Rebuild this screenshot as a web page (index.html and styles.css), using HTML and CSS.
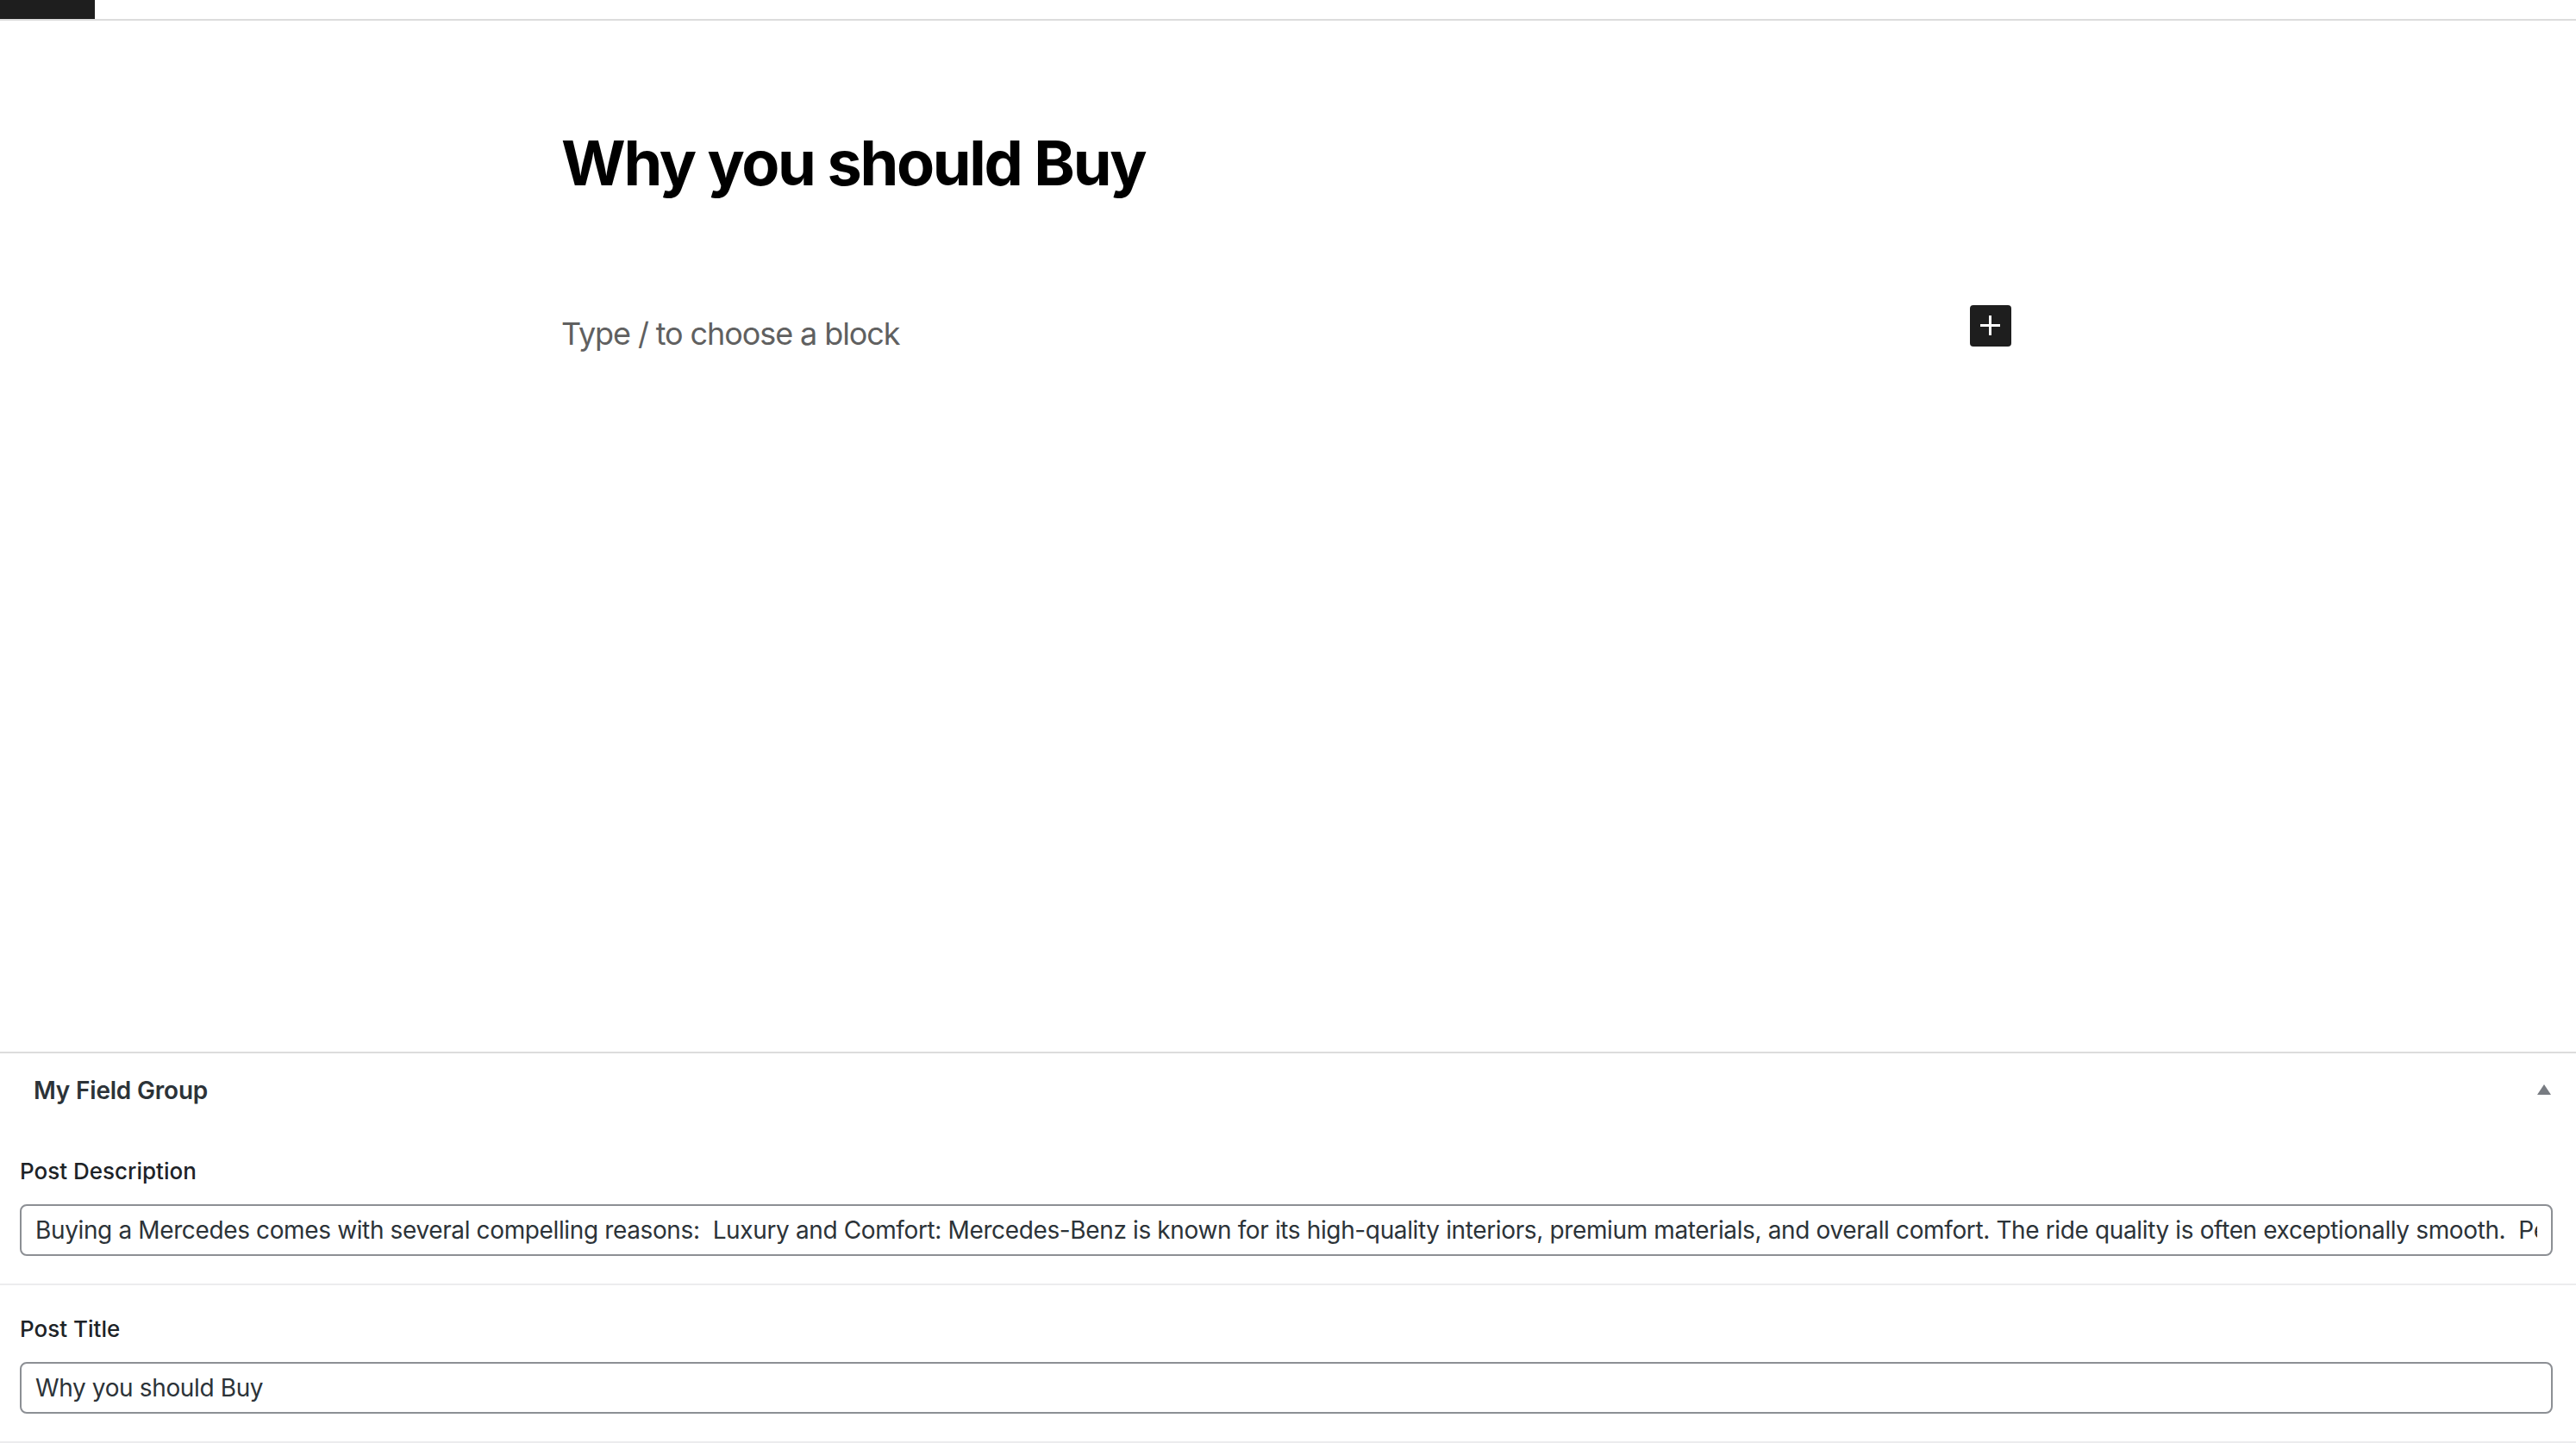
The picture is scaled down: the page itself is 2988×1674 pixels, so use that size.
FILE: index.html
```html
<!DOCTYPE html>
<html lang="en">
<head>
<meta charset="utf-8">
<title>Why you should Buy</title>
<link rel="stylesheet" href="styles.css">
</head>
<body>
<div class="topbar"><div class="logo-btn"></div></div>
<main class="editor">
  <div class="column">
    <h1 class="post-title">Why you should Buy</h1>
    <div class="block-row">
      <p class="placeholder">Type / to choose a block</p>
      <button class="inserter" aria-label="Add block">
        <svg viewBox="0 0 24 24" width="48" height="48"><path d="M11 12.5V17.5H12.5V12.5H17.5V11H12.5V6H11V11H6V12.5H11Z" fill="#fff"/></svg>
      </button>
    </div>
  </div>
</main>
<section class="postbox">
  <div class="postbox-header">
    <h2 class="hndle">My Field Group</h2>
    <span class="toggle"></span>
  </div>
  <div class="field">
    <label class="field-label">Post Description</label>
    <input class="field-input" type="text" value="Buying a Mercedes comes with several compelling reasons:  Luxury and Comfort: Mercedes-Benz is known for its high-quality interiors, premium materials, and overall comfort. The ride quality is often exceptionally smooth.  Performance and Engineering: Mercedes vehicles are engineered for precision.">
  </div>
  <div class="field">
    <label class="field-label">Post Title</label>
    <input class="field-input" type="text" value="Why you should Buy">
  </div>
</section>
</body>
</html>
```

FILE: styles.css
```css
* { box-sizing: border-box; }
html, body { margin: 0; padding: 0; background: #fff; }
body {
  font-family: Inter, "Noto Sans", "Liberation Sans", sans-serif;
  color: #1e1e1e;
  width: 2988px;
  height: 1674px;
  overflow: hidden;
}
.topbar {
  height: 24px;
  border-bottom: 2px solid #dcdcdc;
}
.logo-btn {
  width: 110px;
  height: 22px;
  background: #1e1e1e;
}
.editor {
  height: 1196px;
}
.column {
  width: 1682px;
  margin-left: 651px;
  padding-top: 129px;
}
.post-title {
  margin: 0;
  font-size: 72px;
  line-height: 72px;
  font-weight: 700;
  color: #000;
  letter-spacing: -2.3px;
}
.block-row {
  margin-top: 129px;
  display: flex;
  justify-content: space-between;
  align-items: flex-start;
}
.placeholder {
  margin: 15px 0 0 0;
  font-size: 36px;
  line-height: 36px;
  color: #606060;
  letter-spacing: -1.1px;
}
.inserter {
  width: 48px;
  height: 48px;
  padding: 0;
  border: 0;
  border-radius: 4px;
  background: #1e1e1e;
  display: flex;
  align-items: center;
  justify-content: center;
}
.inserter svg { display: block; }
.postbox {
  border-top: 2px solid #dcdcdc;
}
.postbox-header {
  height: 86px;
  display: flex;
  justify-content: space-between;
  align-items: flex-start;
  padding: 0 29px 0 39px;
}
.hndle {
  margin: 29px 0 0 0;
  font-size: 28px;
  line-height: 28px;
  font-weight: 600;
  color: #2c3338;
  letter-spacing: -0.2px;
}
.toggle {
  margin-top: 36px;
  width: 0;
  height: 0;
  border-left: 8px solid transparent;
  border-right: 8px solid transparent;
  border-bottom: 12px solid #787c82;
}
.field {
  padding: 38px 27px 32px 23px;
  border-bottom: 2px solid #ececee;
}
.field-label {
  display: block;
  font-size: 26px;
  line-height: 26px;
  font-weight: 500;
  color: #1d2327;
  margin-bottom: 25px;
}
.field-input {
  display: block;
  width: 100%;
  height: 60px;
  border: 2px solid #8c8f94;
  border-radius: 8px;
  padding: 0 16px;
  font-family: Inter, "Noto Sans", "Liberation Sans", sans-serif;
  font-size: 28px;
  letter-spacing: -0.37px;
  color: #2c3338;
  background: #fff;
  outline: none;
}
```
